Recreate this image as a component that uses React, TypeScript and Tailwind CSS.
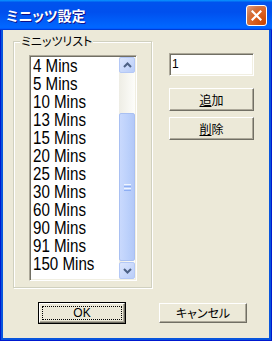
import React from "react";

const items = ["4", "5", "10", "13", "15", "20", "25", "30", "60", "90", "91", "150"];

const font = { fontFamily: '"Liberation Sans","Noto Sans CJK JP",sans-serif' };

function Chevron({ up }: { up?: boolean }) {
  return (
    <svg width="9" height="6" viewBox="0 0 9 6">
      <path
        d={up ? "M1 5 L4.5 1.5 L8 5" : "M1 1 L4.5 4.5 L8 1"}
        fill="none"
        stroke="#4D6185"
        strokeWidth="2"
      />
    </svg>
  );
}

function Btn({ children, className = "" }: { children: React.ReactNode; className?: string }) {
  return (
    <div
      className={
        "flex items-center justify-center bg-[#ECE9D8] border border-t-white border-l-white border-r-[#716F64] border-b-[#716F64] shadow-[inset_-1px_-1px_#ACA899] text-[12px] text-black " +
        className
      }
    >
      {children}
    </div>
  );
}

export default function App() {
  return (
    <div className="w-[272px] h-[341px] flex flex-col select-none" style={font}>
      {/* Title bar */}
      <div className="h-[30px] flex items-center pl-[6px] pr-[5px] bg-[linear-gradient(180deg,#0997FF_0%,#0053EE_8%,#0050EE_40%,#0066FF_88%,#0066FF_93%,#005BFF_95%,#003DD7_96%,#003DD7_100%)]">
        <div
          className="flex-1 text-white font-bold text-[14px] leading-[16px] [text-shadow:1px_1px_#0F1089] [font-feature-settings:'palt']"
          style={{ fontFamily: '"Noto Sans CJK JP",sans-serif' }}
        >
          ミニッツ設定
        </div>
        <div className="w-[21px] h-[21px] rounded-[3px] border border-white bg-[radial-gradient(circle_at_90%_90%,#CC4600_0%,#DC6527_55%,#CD7546_70%,#E5A084_100%)] flex items-center justify-center">
          <svg width="11" height="11" viewBox="0 0 11 11">
            <path d="M1.5 1.5 L9.5 9.5 M9.5 1.5 L1.5 9.5" stroke="white" strokeWidth="2.2" strokeLinecap="square" />
          </svg>
        </div>
      </div>

      {/* Frame + body */}
      <div className="flex-1 flex px-[3px] pb-[3px] bg-[#0855DD] shadow-[inset_1px_0_#0019CF,inset_-1px_0_#0019CF,inset_0_-1px_#0019CF]">
        <div className="flex-1 bg-[#ECE9D8] flex flex-col">
          <div className="flex pl-[10px] pt-[11px]">
            {/* Group box */}
            <div className="relative w-[139px] h-[247px] border border-[#D0D0BF] shadow-[inset_1px_1px_white,1px_1px_white] pl-[15px] pt-[13px]">
              <div
                className="absolute left-[6px] top-[-8px] px-[1px] bg-[#ECE9D8] text-[12px] leading-[14px] text-black [font-feature-settings:'palt']"
                style={{ fontFamily: '"Noto Sans CJK JP",sans-serif' }}
              >
                ミニッツリスト
              </div>
              {/* Listbox */}
              <div className="w-[108px] h-[226px] flex bg-white border border-t-[#ACA899] border-l-[#ACA899] border-r-white border-b-white shadow-[inset_1px_1px_#716F64,inset_-1px_-1px_#F1EFE2] p-[1px]">
                <div className="flex-1 overflow-hidden pl-[2px]">
                  {items.map((n) => (
                    <div
                      key={n}
                      className="h-[18px] leading-[18px] text-[18px] text-black whitespace-nowrap origin-left scale-x-[0.84]"
                    >
                      {n} Mins
                    </div>
                  ))}
                </div>
                {/* Scrollbar */}
                <div className="w-[16px] flex flex-col bg-[linear-gradient(90deg,#EEEDE5,#FDFDFA)]">
                  <div className="h-[16px] rounded-[2px] border border-[#B4C8F6] bg-[linear-gradient(135deg,#DCE6FD,#B9CDF9)] flex items-center justify-center">
                    <Chevron up />
                  </div>
                  <div className="h-[40px]" />
                  <div className="h-[148px] rounded-[2px] border border-[#A9C0F2] bg-[linear-gradient(90deg,#C9D9FD,#BBD0FB_60%,#B3C8F8)] flex flex-col items-center justify-center gap-[1px]">
                    <div className="w-[7px] h-[1px] bg-[#EEF4FE]" />
                    <div className="w-[7px] h-[1px] bg-[#8DAEF4]" />
                    <div className="w-[7px] h-[1px] bg-[#EEF4FE]" />
                    <div className="w-[7px] h-[1px] bg-[#8DAEF4]" />
                  </div>
                  <div className="h-[1px]" />
                  <div className="h-[17px] rounded-[2px] border border-[#B4C8F6] bg-[linear-gradient(135deg,#DCE6FD,#B9CDF9)] flex items-center justify-center">
                    <Chevron />
                  </div>
                </div>
              </div>
            </div>

            {/* Right column */}
            <div className="ml-[17px] mt-[12px] w-[85px] flex flex-col">
              <div className="h-[23px] bg-white border border-t-[#ACA899] border-l-[#ACA899] border-r-white border-b-white shadow-[inset_1px_1px_#716F64,inset_-1px_-1px_#F1EFE2] px-[2px] pt-[2px] text-[12px] leading-[16px] text-black">
                1
              </div>
              <Btn className="h-[23px] mt-[12px]">
                <span style={{ fontFamily: '"Noto Sans CJK JP",sans-serif' }}>
                  <u className="underline-offset-[1px]">追</u>加
                </span>
              </Btn>
              <Btn className="h-[23px] mt-[6px]">
                <span style={{ fontFamily: '"Noto Sans CJK JP",sans-serif' }}>
                  <u className="underline-offset-[1px]">削</u>除
                </span>
              </Btn>
            </div>
          </div>

          {/* Bottom buttons */}
          <div className="flex pl-[35px] mt-[14px] items-start">
            <div className="w-[88px] h-[22px] border border-black flex">
              <Btn className="flex-1 p-[2px]">
                <div className="w-full h-full border border-dotted border-black flex items-center justify-center leading-[12px]">
                  OK
                </div>
              </Btn>
            </div>
            <Btn className="w-[88px] h-[20px] ml-[33px] mt-[1px]">
              <span className="[font-feature-settings:'palt']" style={{ fontFamily: '"Noto Sans CJK JP",sans-serif' }}>
                キャンセル
              </span>
            </Btn>
          </div>
        </div>
      </div>
    </div>
  );
}
